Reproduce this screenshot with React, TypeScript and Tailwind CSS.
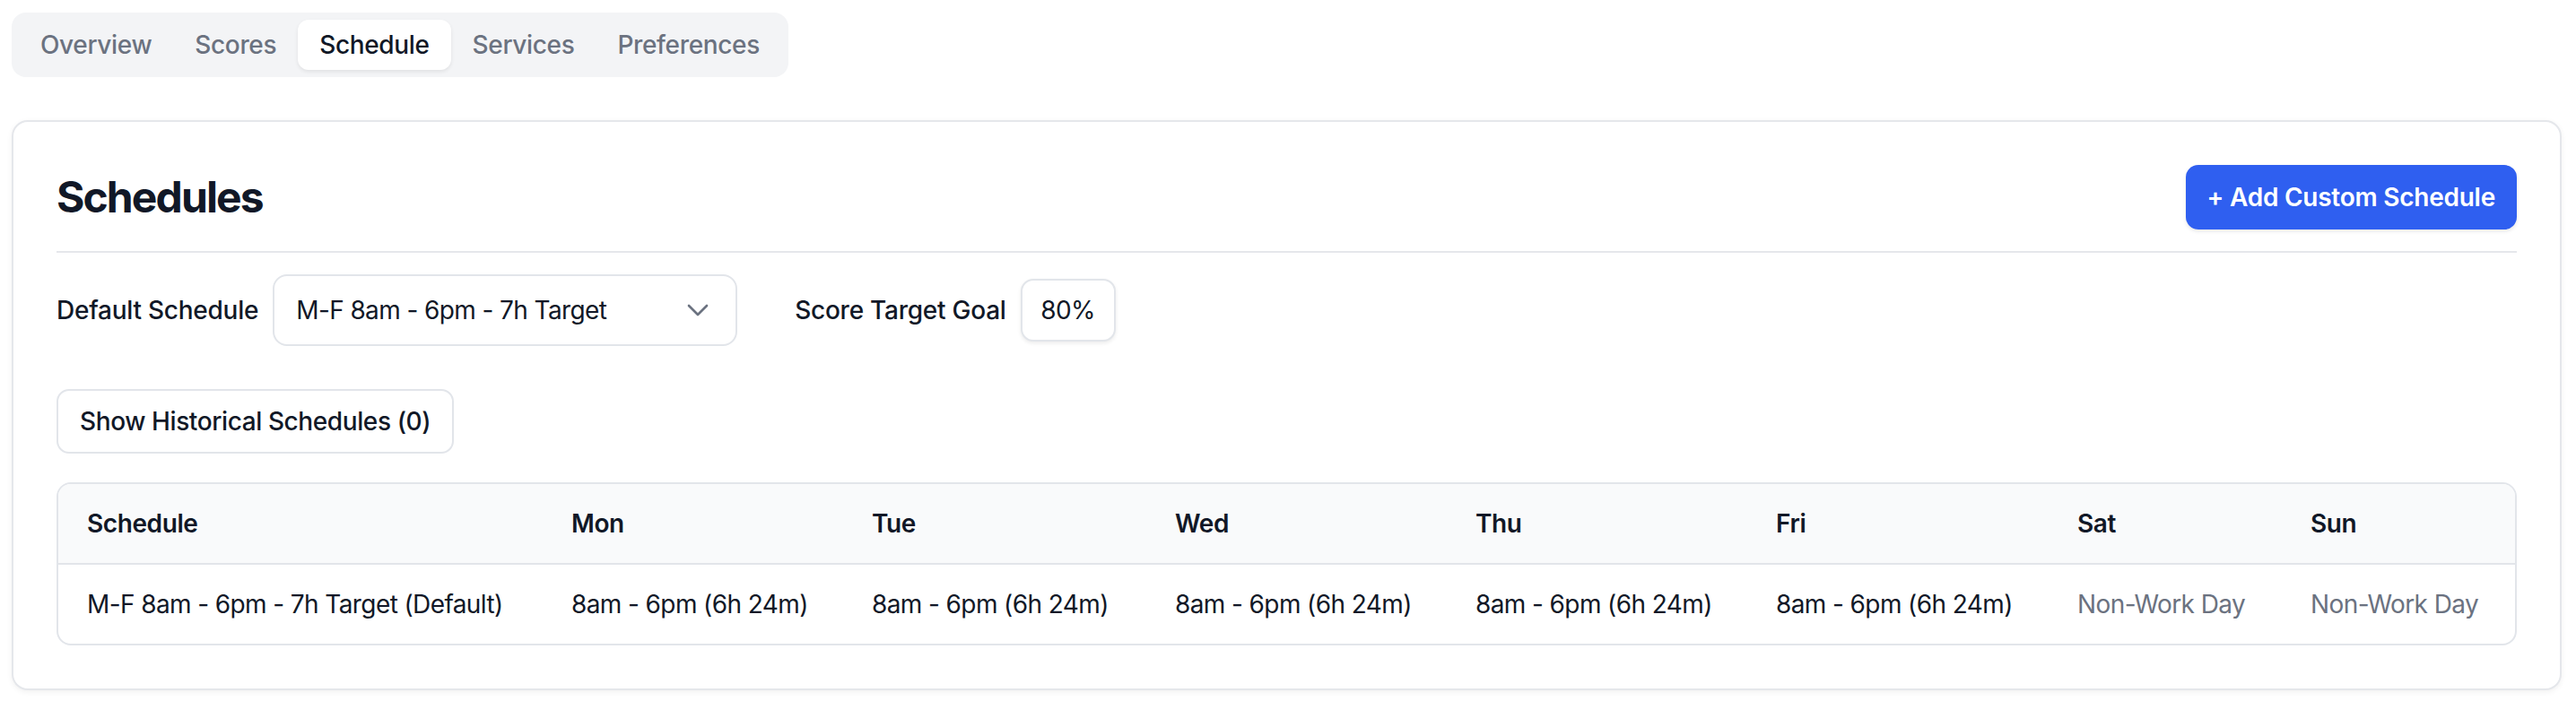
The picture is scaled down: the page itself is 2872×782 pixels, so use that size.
import React from "react";

const tabs = ["Overview", "Scores", "Schedule", "Services", "Preferences"];

const cols = [
  { name: "Schedule", w: "w-[540px]" },
  { name: "Mon", w: "w-[335px]" },
  { name: "Tue", w: "w-[338px]" },
  { name: "Wed", w: "w-[335px]" },
  { name: "Thu", w: "w-[335px]" },
  { name: "Fri", w: "w-[336px]" },
  { name: "Sat", w: "w-[260px]" },
  { name: "Sun", w: "w-[260px]" },
];

const row = [
  { t: "M-F 8am - 6pm - 7h Target (Default)", muted: false },
  { t: "8am - 6pm (6h 24m)", muted: false },
  { t: "8am - 6pm (6h 24m)", muted: false },
  { t: "8am - 6pm (6h 24m)", muted: false },
  { t: "8am - 6pm (6h 24m)", muted: false },
  { t: "8am - 6pm (6h 24m)", muted: false },
  { t: "Non-Work Day", muted: true },
  { t: "Non-Work Day", muted: true },
];

function Chevron() {
  return (
    <svg width="40" height="40" viewBox="0 0 24 24" fill="none" stroke="#6b7280" strokeWidth="1.6" strokeLinecap="round" strokeLinejoin="round">
      <path d="m6 9 6 6 6-6" />
    </svg>
  );
}

export default function App() {
  return (
    <div className="min-h-screen bg-white pl-[13px] pr-[16px] pt-[14px] font-['Inter',sans-serif] tracking-[-0.6px] text-[#111827]">
      <div className="inline-flex h-[72px] items-center rounded-[16px] bg-[#f3f4f6] p-[8px]">
        {tabs.map((t) => (
          <div
            key={t}
            className={
              t === "Schedule"
                ? "flex h-[56px] items-center rounded-[12px] bg-white px-[24px] text-[28px] font-medium tracking-[-0.35px] text-[#111827] shadow-[0_2px_4px_rgba(0,0,0,0.08)]"
                : "flex h-[56px] items-center rounded-[12px] px-[24px] text-[28px] font-medium tracking-[-0.35px] text-[#6b7280]"
            }
          >
            {t}
          </div>
        ))}
      </div>

      <div className="mt-[48px] rounded-[18px] border-2 border-[#e5e7eb] bg-white p-[48px] shadow-[0_2px_6px_rgba(0,0,0,0.06)]">
        <div className="flex items-center justify-between border-b-2 border-[#e5e7eb] pb-[24px]">
          <h2 className="text-[48px] font-bold leading-[64px] tracking-[-1.9px] text-[#111827]">Schedules</h2>
          <button className="flex h-[72px] items-center rounded-[14px] bg-[#2f5ff0] px-[24px] text-[28px] font-semibold tracking-[-0.25px] text-white shadow-[0_2px_4px_rgba(0,0,0,0.1)]">
            + Add Custom Schedule
          </button>
        </div>

        <div className="mt-[24px] flex items-center gap-[64px]">
          <div className="flex items-center gap-[16px]">
            <span className="text-[28px] font-medium tracking-[-0.25px]">Default Schedule</span>
            <div className="flex h-[80px] w-[518px] items-center justify-between rounded-[16px] border-2 border-[#e2e5ea] bg-white pl-[24px] pr-[22px] text-[28px]">
              <span>M-F 8am - 6pm - 7h Target</span>
              <Chevron />
            </div>
          </div>
          <div className="flex items-center gap-[16px]">
            <span className="text-[28px] font-medium tracking-[-0.25px]">Score Target Goal</span>
            <div className="flex h-[70px] w-[106px] items-center justify-center rounded-[14px] border-2 border-[#e2e5ea] bg-white text-[28px] shadow-[0_2px_4px_rgba(0,0,0,0.08)]">
              80%
            </div>
          </div>
        </div>

        <button className="mt-[48px] flex h-[72px] items-center rounded-[14px] border-2 border-[#e2e5ea] bg-white px-[24px] text-[28px] font-medium tracking-[-0.4px] text-[#111827]">
          Show Historical Schedules (0)
        </button>

        <div className="mt-[32px] overflow-hidden rounded-[16px] border-2 border-[#e2e5ea]">
          <table className="w-full table-fixed border-collapse">
            <colgroup>
              {cols.map((c) => (
                <col key={c.name} className={c.w} />
              ))}
            </colgroup>
            <thead>
              <tr className="border-b-2 border-[#e2e5ea] bg-[#f9fafb]">
                {cols.map((c) => (
                  <th key={c.name} className="px-[32px] py-[24px] text-left text-[28px] font-semibold leading-[40px] tracking-[-0.4px] text-[#111827]">
                    {c.name}
                  </th>
                ))}
              </tr>
            </thead>
            <tbody>
              <tr>
                {row.map((c, i) => (
                  <td
                    key={i}
                    className={
                      c.muted
                        ? "whitespace-nowrap px-[32px] py-[24px] text-[28px] leading-[40px] text-[#6b7280]"
                        : "whitespace-nowrap px-[32px] py-[24px] text-[28px] leading-[40px] text-[#111827]"
                    }
                  >
                    {c.t}
                  </td>
                ))}
              </tr>
            </tbody>
          </table>
        </div>
      </div>
    </div>
  );
}
